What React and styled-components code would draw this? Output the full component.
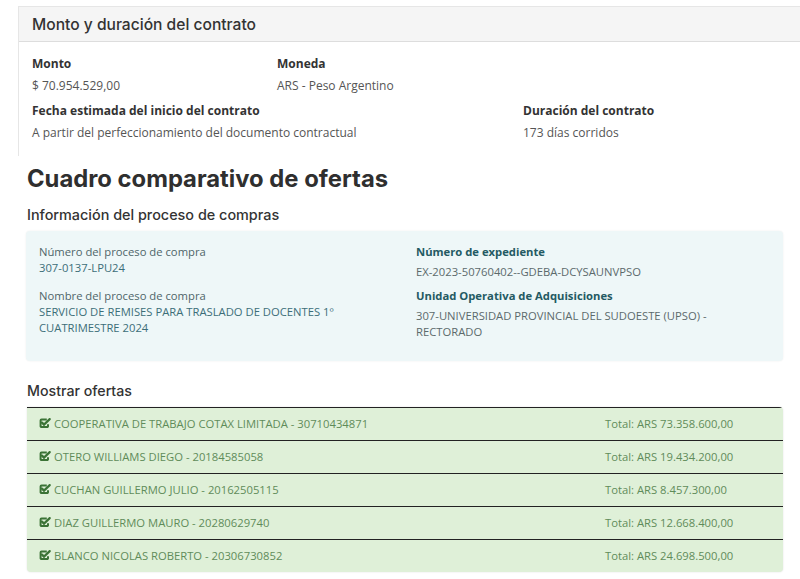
import React from "react";
import styled, { createGlobalStyle } from "styled-components";

const Global = createGlobalStyle`
  html, body { margin: 0; padding: 0; background: #fff; overflow: hidden; }
  body { font-family: "Open Sans", "Liberation Sans", sans-serif; color: #555; }
  * { box-sizing: border-box; }
`;

const Page = styled.div`
  width: 800px;
  height: 579px;
  overflow: hidden;
  padding-top: 6px;
`;

const Card = styled.section`
  margin-left: 18px;
  margin-right: -20px;
  border: 1px solid #e6e6e6;
  border-bottom: none;
  background: #fff;
`;

const CardHeader = styled.div`
  background: #f5f5f5;
  border-bottom: 1px solid #dddddd;
  height: 35px;
  display: flex;
  align-items: center;
  padding-left: 13px;
  font-family: "Inter", "Open Sans", sans-serif;
  font-weight: 500;
  font-size: 15.6px;
  color: #333;
`;

const CardBody = styled.div`
  padding: 13px 13px 14px;
  display: grid;
  grid-template-columns: 245px 246px 246px;
  row-gap: 7px;
`;

const Field = styled.div`
  grid-column: ${(p) => p.$span || "auto"};
  display: flex;
  flex-direction: column;
  gap: 4px;
`;

const Label = styled.div`
  font-weight: 700;
  font-size: 12px;
  color: #333;
  line-height: 18px;
`;

const Value = styled.div`
  font-size: 12px;
  color: #555;
  line-height: 18px;
`;

const Main = styled.div`
  padding: 0 17px 0 27px;
`;

const Title = styled.h1`
  margin: 6px 0 0;
  font-family: "Inter", "Open Sans", sans-serif;
  font-weight: 700;
  font-size: 23.8px;
  line-height: 34px;
  color: #2f2f2f;
`;

const SubTitle = styled.h2`
  margin: ${(p) => p.$mt || "9px"} 0 0;
  font-family: "Inter", "Open Sans", sans-serif;
  font-weight: 500;
  font-size: ${(p) => p.$size || "14.4px"};
  line-height: 20px;
  color: #333;
`;

const InfoBox = styled.div`
  margin-top: 6px;
  margin-left: -1px;
  background: #eef7f8;
  border-radius: 4px;
  box-shadow: 0 0 2px rgba(0, 0, 0, 0.08);
  padding: 13px 12px 20px 13px;
  display: grid;
  grid-template-columns: 377px 1fr;
  height: 130px;
`;

const InfoCol = styled.div`
  display: flex;
  flex-direction: column;
  gap: ${(p) => (p.$strong ? "8px" : "12px")};
`;

const InfoItem = styled.div`
  display: flex;
  flex-direction: column;
  gap: ${(p) => (p.$strong ? "4px" : "0")};
`;

const InfoLabel = styled.div`
  font-size: 11.25px;
  line-height: 16px;
  font-weight: ${(p) => (p.$strong ? 700 : 400)};
  color: ${(p) => (p.$strong ? "#245a63" : "#4f6569")};
`;

const InfoValue = styled.div`
  font-size: 11.25px;
  line-height: 16px;
  color: ${(p) => (p.$strong ? "#5c6a6c" : "#3c6e78")};
`;

const Offers = styled.div`
  margin-top: 6px;
  background: #dff0d8;
  border-radius: 0 4px 4px 4px;
  box-shadow: 0 0 2px rgba(0, 0, 0, 0.12);
  overflow: hidden;
`;

const OfferRow = styled.div`
  height: 33px;
  border-top: 1px solid #222;
  display: grid;
  grid-template-columns: 1fr 178px;
  align-items: center;
  padding-left: 12px;
  padding-bottom: 1px;
  font-size: 11.25px;
  color: #5f8c5a;
`;

const OfferName = styled.div`
  display: flex;
  align-items: center;
  gap: 3px;
`;

const Check = () => (
  <svg width="12" height="11" viewBox="0 0 12 11" aria-hidden="true">
    <path
      d="M9 6.2V8.2a.9.9 0 0 1-.9.9H2.5a.9.9 0 0 1-.9-.9V2.5a.9.9 0 0 1 .9-.9h5.3"
      fill="none"
      stroke="#3b7336"
      strokeWidth="2"
    />
    <path
      d="M3 4.6l2 2L10.7 1.1"
      fill="none"
      stroke="#3b7336"
      strokeWidth="2.2"
      strokeLinecap="round"
    />
  </svg>
);

const offers = [
  ["COOPERATIVA DE TRABAJO COTAX LIMITADA - 30710434871", "73.358.600,00"],
  ["OTERO WILLIAMS DIEGO - 20184585058", "19.434.200,00"],
  ["CUCHAN GUILLERMO JULIO - 20162505115", "8.457.300,00"],
  ["DIAZ GUILLERMO MAURO - 20280629740", "12.668.400,00"],
  ["BLANCO NICOLAS ROBERTO - 20306730852", "24.698.500,00"],
];

export default function App() {
  return (
    <>
      <Global />
      <Page>
        <Card>
          <CardHeader>Monto y duración del contrato</CardHeader>
          <CardBody>
            <Field>
              <Label>Monto</Label>
              <Value>$ 70.954.529,00</Value>
            </Field>
            <Field $span="2 / 4">
              <Label>Moneda</Label>
              <Value>ARS - Peso Argentino</Value>
            </Field>
            <Field $span="1 / 3">
              <Label>Fecha estimada del inicio del contrato</Label>
              <Value>A partir del perfeccionamiento del documento contractual</Value>
            </Field>
            <Field>
              <Label>Duración del contrato</Label>
              <Value>173 días corridos</Value>
            </Field>
          </CardBody>
        </Card>
        <Main>
          <Title>Cuadro comparativo de ofertas</Title>
          <SubTitle>Información del proceso de compras</SubTitle>
          <InfoBox>
            <InfoCol>
              <InfoItem>
                <InfoLabel>Número del proceso de compra</InfoLabel>
                <InfoValue>307-0137-LPU24</InfoValue>
              </InfoItem>
              <InfoItem>
                <InfoLabel>Nombre del proceso de compra</InfoLabel>
                <InfoValue>
                  SERVICIO DE REMISES PARA TRASLADO DE DOCENTES 1º
                  <br />
                  CUATRIMESTRE 2024
                </InfoValue>
              </InfoItem>
            </InfoCol>
            <InfoCol $strong>
              <InfoItem $strong>
                <InfoLabel $strong>Número de expediente</InfoLabel>
                <InfoValue $strong>EX-2023-50760402--GDEBA-DCYSAUNVPSO</InfoValue>
              </InfoItem>
              <InfoItem $strong>
                <InfoLabel $strong>Unidad Operativa de Adquisiciones</InfoLabel>
                <InfoValue $strong>
                  307-UNIVERSIDAD PROVINCIAL DEL SUDOESTE (UPSO) -
                  <br />
                  RECTORADO
                </InfoValue>
              </InfoItem>
            </InfoCol>
          </InfoBox>
          <SubTitle $mt="20px" $size="14.2px">Mostrar ofertas</SubTitle>
          <Offers>
            {offers.map(([name, total]) => (
              <OfferRow key={name}>
                <OfferName>
                  <Check />
                  {name}
                </OfferName>
                <div>Total: ARS {total}</div>
              </OfferRow>
            ))}
          </Offers>
        </Main>
      </Page>
    </>
  );
}
